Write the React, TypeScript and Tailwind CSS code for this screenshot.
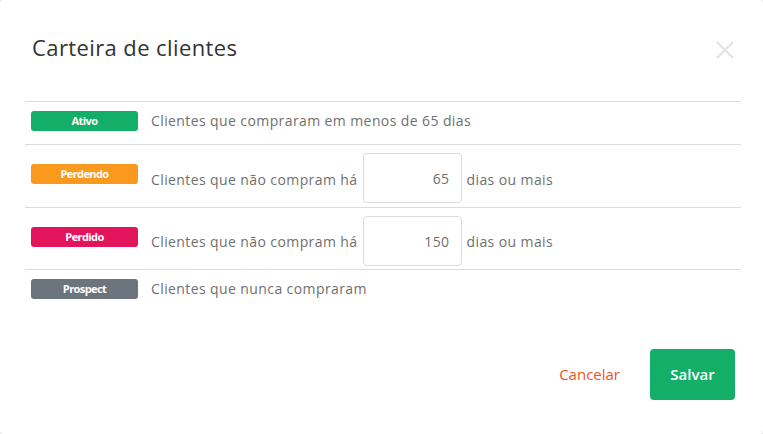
import React from "react";

const font = { fontFamily: '"Open Sans", "Noto Sans", sans-serif' };

function Badge({ label, color }: { label: string; color: string }) {
  return (
    <div
      className={`w-[107px] h-[20px] rounded-[3px] flex items-center justify-center text-white text-[11px] font-bold tracking-[-0.6px] shrink-0 ${color}`}
    >
      {label}
    </div>
  );
}

function NumInput({ value }: { value: string }) {
  return (
    <div className="w-[99px] h-[50px] border border-[#dcdcdc] rounded-[4px] flex items-center justify-end pr-[11px] text-[14px] tracking-[0.4px] text-[#707070] shrink-0">
      {value}
    </div>
  );
}

const desc = "text-[14px] leading-[20px] text-[#707070] tracking-[0.4px]";

export default function App() {
  return (
    <div className="w-[763px] h-[434px] bg-[#e9e9e9] overflow-hidden" style={font}>
      <div className="w-full h-full bg-white rounded-[4px] flex flex-col">
        <div className="h-[101px] flex items-start justify-between pl-[32px] pr-[28px] pt-[32px]">
          <h1 className="text-[22px] leading-[30px] text-[#333] font-normal tracking-[0.4px]">Carteira de clientes</h1>
          <svg width="20" height="20" viewBox="0 0 20 20" className="mt-[8px]">
            <path d="M2 2 L18 18 M18 2 L2 18" stroke="#e2e2e2" strokeWidth="2.2" />
          </svg>
        </div>
        <div className="mx-[25px] mr-[22px] border-t border-[#dcdcdc]">
          <div className="h-[43px] flex items-start pl-[6px] pt-[9px] border-b border-[#dcdcdc]">
            <Badge label="Ativo" color="bg-[#13ae67]" />
            <span className={`ml-[13px] ${desc}`}>Clientes que compraram em menos de 65 dias</span>
          </div>
          <div className="h-[63px] flex items-start pl-[6px] border-b border-[#dcdcdc]">
            <div className="mt-[19px]">
              <Badge label="Perdendo" color="bg-[#f9991d]" />
            </div>
            <span className={`ml-[13px] mt-[25px] ${desc}`}>Clientes que não compram há</span>
            <div className="ml-[5px] mt-[8px]">
              <NumInput value="65" />
            </div>
            <span className={`ml-[5px] mt-[25px] ${desc}`}>dias ou mais</span>
          </div>
          <div className="h-[62px] flex items-start pl-[6px] border-b border-[#dcdcdc]">
            <div className="mt-[19px]">
              <Badge label="Perdido" color="bg-[#e2145b]" />
            </div>
            <span className={`ml-[13px] mt-[24px] ${desc}`}>Clientes que não compram há</span>
            <div className="ml-[5px] mt-[8px]">
              <NumInput value="150" />
            </div>
            <span className={`ml-[5px] mt-[24px] ${desc}`}>dias ou mais</span>
          </div>
          <div className="h-[40px] flex items-start pl-[6px] pt-[9px]">
            <Badge label="Prospect" color="bg-[#6c747e]" />
            <span className={`ml-[13px] ${desc}`}>Clientes que nunca compraram</span>
          </div>
        </div>
        <div className="flex justify-end items-center pr-[28px] mt-[39px]">
          <button className="text-[15px] text-[#f4511e] mr-[30px]">Cancelar</button>
          <button className="w-[85px] h-[51px] rounded-[4px] bg-[#13ae67] text-white text-[15px] font-semibold">
            Salvar
          </button>
        </div>
      </div>
    </div>
  );
}
